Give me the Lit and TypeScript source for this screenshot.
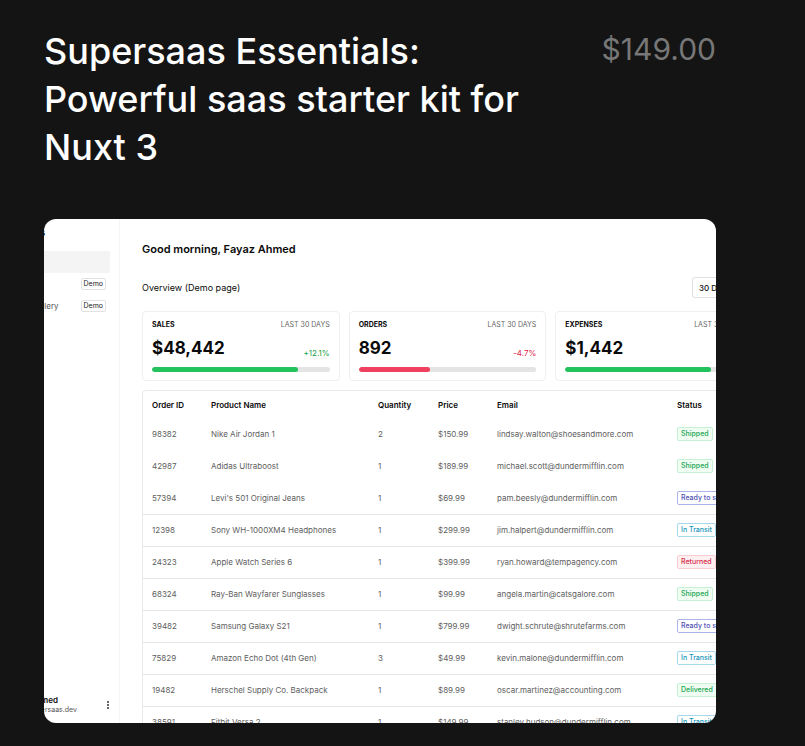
import { LitElement, html, css } from "lit";
import { customElement } from "lit/decorators.js";

interface Stat {
  label: string;
  value: string;
  delta: string;
  tone: "up" | "down";
  fill: number;
}

type Status = "Shipped" | "Ready to ship" | "In Transit" | "Returned" | "Delivered";

interface Order {
  id: string;
  product: string;
  quantity: number;
  price: string;
  email: string;
  status: Status;
}

const STATS: Stat[] = [
  { label: "SALES", value: "$48,442", delta: "+12.1%", tone: "up", fill: 82 },
  { label: "ORDERS", value: "892", delta: "-4.7%", tone: "down", fill: 40 },
  { label: "EXPENSES", value: "$1,442", delta: "+2.4%", tone: "up", fill: 82 },
];

const ORDERS: Order[] = [
  { id: "98382", product: "Nike Air Jordan 1", quantity: 2, price: "$150.99", email: "lindsay.walton@shoesandmore.com", status: "Shipped" },
  { id: "42987", product: "Adidas Ultraboost", quantity: 1, price: "$189.99", email: "michael.scott@dundermifflin.com", status: "Shipped" },
  { id: "57394", product: "Levi's 501 Original Jeans", quantity: 1, price: "$69.99", email: "pam.beesly@dundermifflin.com", status: "Ready to ship" },
  { id: "12398", product: "Sony WH-1000XM4 Headphones", quantity: 1, price: "$299.99", email: "jim.halpert@dundermifflin.com", status: "In Transit" },
  { id: "24323", product: "Apple Watch Series 6", quantity: 1, price: "$399.99", email: "ryan.howard@tempagency.com", status: "Returned" },
  { id: "68324", product: "Ray-Ban Wayfarer Sunglasses", quantity: 1, price: "$99.99", email: "angela.martin@catsgalore.com", status: "Shipped" },
  { id: "39482", product: "Samsung Galaxy S21", quantity: 1, price: "$799.99", email: "dwight.schrute@shrutefarms.com", status: "Ready to ship" },
  { id: "75829", product: "Amazon Echo Dot (4th Gen)", quantity: 3, price: "$49.99", email: "kevin.malone@dundermifflin.com", status: "In Transit" },
  { id: "19482", product: "Herschel Supply Co. Backpack", quantity: 1, price: "$89.99", email: "oscar.martinez@accounting.com", status: "Delivered" },
  { id: "38591", product: "Fitbit Versa 2", quantity: 1, price: "$149.99", email: "stanley.hudson@dundermifflin.com", status: "In Transit" },
];

const STATUS_CLASS: Record<Status, string> = {
  Shipped: "green",
  Delivered: "green",
  "Ready to ship": "indigo",
  "In Transit": "cyan",
  Returned: "red",
};

@customElement("dash-sidebar")
class DashSidebar extends LitElement {
  static styles = css`
    :host {
      display: flex;
      flex-direction: column;
      box-sizing: border-box;
      padding: 7px 9px 8px 0;
      border-right: 1px solid #f6f6f6;
    }
    .brand {
      margin-right: 65px;
      text-align: right;
      font-size: 10px;
      font-weight: 700;
      line-height: 12px;
    }
    nav {
      display: flex;
      flex-direction: column;
      margin-top: 13px;
    }
    .item {
      display: flex;
      align-items: center;
      justify-content: flex-end;
      gap: 22px;
      box-sizing: border-box;
      height: 22px;
      padding-right: 4px;
      border-radius: 2px;
      color: #555;
      font-size: 8px;
      text-decoration: none;
    }
    .active {
      background: #f4f4f5;
    }
    .tag {
      padding: 0 2px;
      border: 1px solid #e2e2e2;
      border-radius: 2px;
      color: #222;
      font-size: 7px;
      line-height: 10px;
    }
    .user {
      display: flex;
      align-items: center;
      justify-content: flex-end;
      margin-top: auto;
    }
    .who {
      display: grid;
      width: 97px;
      line-height: 10px;
    }
    .name {
      padding-right: 48px;
      text-align: right;
      font-size: 8px;
      font-weight: 600;
    }
    .mail {
      padding-right: 29px;
      text-align: right;
      color: #555;
      font-size: 7px;
    }
    .more {
      display: flex;
      padding: 0;
      border: 0;
      background: none;
    }
  `;

  render() {
    return html`
      <div class="brand">Supersaas</div>
      <nav>
        <a class="item active" href="#home" aria-label="Home"></a>
        <a class="item" href="#table"><span class="tag">Demo</span></a>
        <a class="item" href="#gallery">Gallery<span class="tag">Demo</span></a>
      </nav>
      <div class="user">
        <div class="who">
          <span class="name">Ahmed</span>
          <span class="mail">supersaas.dev</span>
        </div>
        <button class="more" aria-label="Account menu">
          <svg width="4" height="10" viewBox="0 0 4 10" fill="#222">
            <circle cx="2" cy="2" r="0.9" />
            <circle cx="2" cy="5" r="0.9" />
            <circle cx="2" cy="8" r="0.9" />
          </svg>
        </button>
      </div>
    `;
  }
}

@customElement("dash-main")
class DashMain extends LitElement {
  static styles = css`
    :host {
      display: block;
      box-sizing: border-box;
      min-width: 0;
      padding: 20px 23px 0 22px;
    }
    h2 {
      margin: 0;
      font-size: 11px;
      font-weight: 600;
      line-height: 20px;
    }
    .bar {
      display: flex;
      align-items: center;
      justify-content: space-between;
      margin-top: 18px;
      font-size: 9px;
    }
    select {
      box-sizing: border-box;
      width: 61px;
      height: 21px;
      padding: 0 6px;
      border: 1px solid #e0e0e0;
      border-radius: 3px;
      appearance: none;
      background: #fff;
      color: #111;
      font: 500 8px Inter, sans-serif;
    }
    .stats {
      display: grid;
      grid-template-columns: repeat(3, 1fr);
      gap: 9px;
      margin-top: 13px;
    }
    .stat {
      padding: 8px 9px;
      border: 1px solid #efefef;
      border-radius: 4px;
    }
    .line {
      display: flex;
      justify-content: space-between;
      font-size: 7px;
      line-height: 10px;
    }
    .label {
      font-weight: 700;
    }
    .period {
      color: #666;
    }
    .figures {
      display: flex;
      align-items: flex-end;
      justify-content: space-between;
      margin-top: 7px;
    }
    .value {
      font-size: 17px;
      font-weight: 700;
      line-height: 22px;
    }
    .delta {
      font-size: 8px;
      line-height: 12px;
    }
    .delta.up {
      color: #16a34a;
    }
    .delta.down {
      color: #e11d48;
    }
    .track {
      height: 5px;
      margin-top: 8px;
      overflow: hidden;
      border-radius: 3px;
      background: #e4e4e4;
    }
    .fill {
      height: 100%;
      border-radius: 3px;
    }
    .fill.up {
      background: #22c35d;
    }
    .fill.down {
      background: #ef4060;
    }
    .orders {
      margin-top: 9px;
      border: 1px solid #e9e9e9;
      border-radius: 4px;
    }
    table {
      width: 100%;
      table-layout: fixed;
      border-collapse: collapse;
      font-size: 8px;
      line-height: 12px;
    }
    th,
    td {
      box-sizing: border-box;
      padding: 0 0 0 9px;
      text-align: left;
      white-space: nowrap;
    }
    th {
      height: 27px;
      font-weight: 600;
    }
    td {
      height: 32px;
      border-bottom: 1px solid #e6e6e6;
      color: #606060;
    }
    tr:nth-child(-n + 2) td {
      border-color: #fdfdfd;
    }
    .id,
    .price {
      width: 59px;
    }
    .product {
      width: 167px;
    }
    .quantity {
      width: 60px;
    }
    .email {
      width: 180px;
    }
    .status {
      display: inline-block;
      padding: 0 3px;
      border: 1px solid;
      border-radius: 2px;
      font-size: 7px;
      font-weight: 500;
      line-height: 12px;
      vertical-align: middle;
    }
    .green {
      border-color: #c6f2d4;
      background: #effdf3;
      color: #22a552;
    }
    .indigo {
      border-color: #aab4ea;
      color: #4f53b5;
    }
    .cyan {
      border-color: #a5d8e8;
      color: #1796b8;
    }
    .red {
      border-color: #fbcdd2;
      background: #fef0f1;
      color: #d62a48;
    }
  `;

  render() {
    return html`
      <h2>Good morning, Fayaz Ahmed</h2>
      <div class="bar">
        <span>Overview (Demo page)</span>
        <select aria-label="Period">
          <option>30 Days</option>
        </select>
      </div>
      <div class="stats">
        ${STATS.map(
          (s) => html`
            <div class="stat">
              <div class="line">
                <span class="label">${s.label}</span>
                <span class="period">LAST 30 DAYS</span>
              </div>
              <div class="figures">
                <span class="value">${s.value}</span>
                <span class="delta ${s.tone}">${s.delta}</span>
              </div>
              <div class="track">
                <div class="fill ${s.tone}" style="width: ${s.fill}%"></div>
              </div>
            </div>
          `,
        )}
      </div>
      <div class="orders">
        <table>
          <thead>
            <tr>
              <th class="id">Order ID</th>
              <th class="product">Product Name</th>
              <th class="quantity">Quantity</th>
              <th class="price">Price</th>
              <th class="email">Email</th>
              <th>Status</th>
            </tr>
          </thead>
          <tbody>
            ${ORDERS.map(
              (o) => html`
                <tr>
                  <td>${o.id}</td>
                  <td>${o.product}</td>
                  <td>${o.quantity}</td>
                  <td>${o.price}</td>
                  <td>${o.email}</td>
                  <td><span class="status ${STATUS_CLASS[o.status]}">${o.status}</span></td>
                </tr>
              `,
            )}
          </tbody>
        </table>
      </div>
    `;
  }
}

@customElement("app-root")
class AppRoot extends LitElement {
  static styles = css`
    :host {
      display: block;
      box-sizing: border-box;
      min-height: 100vh;
      padding: 27px 89px 23px 44px;
      background: #141414;
      color: #fff;
      font-family: Inter, sans-serif;
    }
    header {
      display: flex;
      align-items: flex-start;
      justify-content: space-between;
      gap: 48px;
    }
    h1 {
      margin: 0;
      font-size: 36px;
      font-weight: 500;
      line-height: 48px;
    }
    .cost {
      color: #777;
      font-size: 30px;
      font-weight: 400;
      line-height: 44px;
    }
    .preview {
      aspect-ratio: 4 / 3;
      margin-top: 48px;
      overflow: hidden;
      border-radius: 12px;
      background: #fff;
      color: #0a0a0a;
    }
    .dashboard {
      display: grid;
      grid-template-columns: 140px 1fr;
      grid-template-rows: 100%;
      width: calc(100% + 124px);
      height: 100%;
      margin-left: -64px;
    }
  `;

  render() {
    return html`
      <header>
        <h1>Supersaas Essentials: Powerful saas starter kit for Nuxt 3</h1>
        <div class="cost">$149.00</div>
      </header>
      <div class="preview">
        <div class="dashboard">
          <dash-sidebar></dash-sidebar>
          <dash-main></dash-main>
        </div>
      </div>
    `;
  }
}
